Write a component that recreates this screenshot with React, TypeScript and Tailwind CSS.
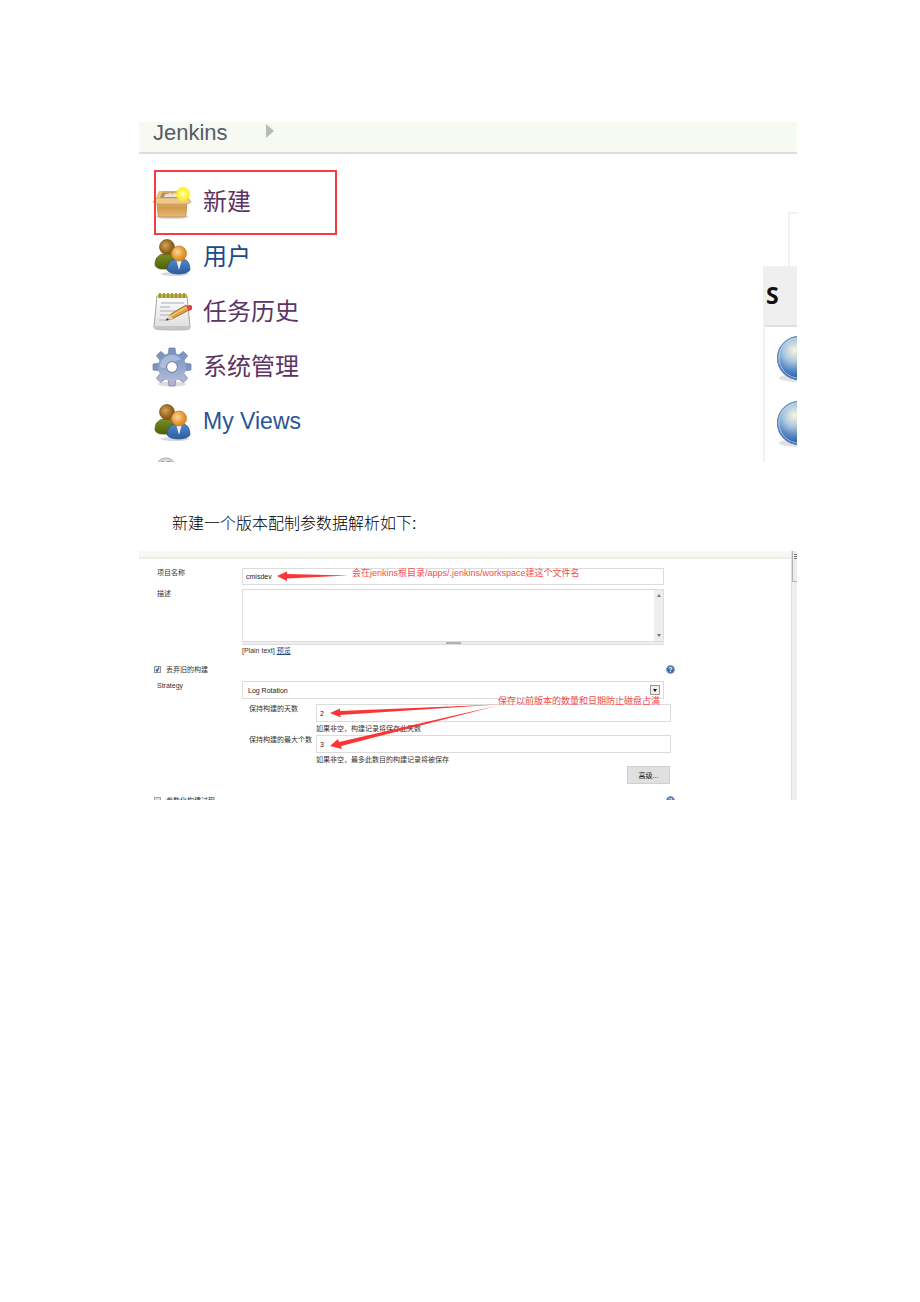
import type { ReactNode } from 'react';

function BoxIcon() {
  return (
    <svg viewBox="0 0 40 40" className="h-10 w-10 shrink-0" aria-hidden="true">
      <defs>
        <linearGradient id="boxFront" x1="0" y1="0" x2="0" y2="1">
          <stop offset="0" stopColor="#e6b877" />
          <stop offset="0.5" stopColor="#d29a4c" />
          <stop offset="1" stopColor="#e9bd7c" />
        </linearGradient>
        <radialGradient id="boxStar">
          <stop offset="0" stopColor="#fffef0" />
          <stop offset="0.3" stopColor="#fff87a" />
          <stop offset="0.7" stopColor="#fdf21c" />
          <stop offset="1" stopColor="#fdf21c" stopOpacity="0" />
        </radialGradient>
      </defs>
      <ellipse cx="20" cy="35" rx="17" ry="2" fill="#000" opacity="0.13" />
      <path d="M7 9h25l3 8H4z" fill="#d9a864" />
      <path d="M9 11h22l2 5H7z" fill="#b98d54" />
      <path d="M12 15q1-4 4-3 2-2 4 0 3-2 5 0 3 0 3 3z" fill="#e6e2da" />
      <path d="M5 17h30l-1 16q0 2-2 2H8q-2 0-2-2z" fill="url(#boxFront)" stroke="#b98644" strokeWidth="0.8" />
      <path d="M4 16L1 20l3 2h32l3-2-3-4z" fill="#efc88f" stroke="#c99a5a" strokeWidth="0.7" />
      <path d="M7 9L4 16h4l3-7z" fill="#e8bf83" />
      <circle cx="31" cy="12" r="8" fill="url(#boxStar)" />
    </svg>
  );
}

function UsersIcon() {
  return (
    <svg viewBox="0 0 40 40" className="h-10 w-10 shrink-0" aria-hidden="true">
      <defs>
        <radialGradient id="headBack" cx="0.4" cy="0.4">
          <stop offset="0" stopColor="#d3a558" />
          <stop offset="1" stopColor="#8c5b16" />
        </radialGradient>
        <radialGradient id="headFront" cx="0.4" cy="0.4">
          <stop offset="0" stopColor="#fbd79a" />
          <stop offset="1" stopColor="#e0901f" />
        </radialGradient>
        <linearGradient id="bodyBack" x1="0" y1="0" x2="0" y2="1">
          <stop offset="0" stopColor="#7b8d22" />
          <stop offset="1" stopColor="#4e6105" />
        </linearGradient>
        <linearGradient id="bodyFront" x1="0" y1="0" x2="0" y2="1">
          <stop offset="0" stopColor="#5387cc" />
          <stop offset="1" stopColor="#2b5c9f" />
        </linearGradient>
      </defs>
      <ellipse cx="23" cy="37" rx="14" ry="2" fill="#000" opacity="0.15" />
      <path d="M3 27q0-8 8-10h8q4 2 5 7l-5 8H9q-6-1-6-5z" fill="url(#bodyBack)" stroke="#48580d" strokeWidth="0.7" />
      <circle cx="15" cy="10" r="7.5" fill="url(#headBack)" stroke="#7c5218" strokeWidth="0.7" />
      <path d="M15 33q0-9 8-11h9q6 2 6 11-3 4-11.5 4T15 33z" fill="url(#bodyFront)" stroke="#285292" strokeWidth="0.7" />
      <path d="M24 22l3 11 3-11z" fill="#eef3fa" />
      <circle cx="27" cy="16.5" r="7.5" fill="url(#headFront)" stroke="#b8741c" strokeWidth="0.7" />
    </svg>
  );
}

function NotepadIcon() {
  return (
    <svg viewBox="0 0 40 40" className="h-10 w-10 shrink-0" aria-hidden="true">
      <defs>
        <linearGradient id="padPaper" x1="0" y1="0" x2="0" y2="1">
          <stop offset="0" stopColor="#fff" />
          <stop offset="1" stopColor="#dedede" />
        </linearGradient>
      </defs>
      <ellipse cx="21" cy="37.5" rx="17" ry="1.5" fill="#000" opacity="0.15" />
      <path d="M5 4h30l3 31q0 2-2 2H4q-2 0-2-2z" fill="url(#padPaper)" stroke="#a5a5a0" strokeWidth="1" />
      <path d="M2 34h36v2q0 1-2 1H4q-2 0-2-1z" fill="#c5c5c2" />
      <path d="M6 2h29v4H6z" fill="#c2b64a" />
      <path d="M8 1v5M12 1v5M16 1v5M20 1v5M24 1v5M28 1v5M32 1v5" stroke="#94882f" strokeWidth="1.5" />
      <path d="M9 11h23M8 15h10M8 19h20M8 23h11M7 28h8" stroke="#c4c4c4" strokeWidth="1.3" />
      <path d="M15 28l4-6 15-9 3 5-17 9z" fill="#dfa040" stroke="#8f6424" strokeWidth="0.8" />
      <path d="M19 24l16-9" stroke="#f4cf83" strokeWidth="1.3" />
      <path d="M14 28l4-5 3 4z" fill="#e9d1a5" />
      <path d="M13.5 28.5l2-2.5 1.5 2z" fill="#333" />
      <path d="M34 14l3-1q4 0 4 4l-4 2z" fill="#e2433e" />
    </svg>
  );
}

const teeth = [0, 45, 90, 135, 180, 225, 270, 315];

function GearIcon() {
  return (
    <svg viewBox="0 0 40 40" className="h-10 w-10 shrink-0" aria-hidden="true">
      <defs>
        <linearGradient id="gearBody" gradientUnits="userSpaceOnUse" x1="0" y1="0" x2="0" y2="40">
          <stop offset="0" stopColor="#6f8cb8" />
          <stop offset="0.5" stopColor="#91a5cb" />
          <stop offset="1" stopColor="#c3c0dd" />
        </linearGradient>
      </defs>
      <ellipse cx="20" cy="37" rx="14" ry="2.5" fill="#000" opacity="0.14" />
      {teeth.map(angle => (
        <path key={angle} d="M16 9l1-8h6l1 8z" fill={angle > 90 && angle < 270 ? '#b0b2d4' : '#7d95bf'} stroke="#6f80a6" strokeWidth="0.7" transform={`rotate(${angle} 20 20)`} />
      ))}
      <path fillRule="evenodd" d="M20 6a14 14 0 1 0 0 28a14 14 0 1 0 0-28zM20 15a5 5 0 1 1 0 10a5 5 0 1 1 0-10z" fill="url(#gearBody)" />
      <path d="M8 20a12 12 0 0 1 21-8q-7 3-9 3-4 0-5 5-3 2-7 0z" fill="#c9d6ea" opacity="0.55" />
      <circle cx="20" cy="20" r="5.5" fill="none" stroke="#7182ab" strokeWidth="1" />
    </svg>
  );
}

function DomeIcon() {
  return (
    <svg viewBox="0 0 40 40" className="h-10 w-10 shrink-0" aria-hidden="true">
      <circle cx="14" cy="11" r="10" fill="#dcdcdc" stroke="#a8a8a8" strokeWidth="1" />
      <path d="M9 5h3M15 5h4" stroke="#888" strokeWidth="1.5" />
    </svg>
  );
}

function BallIcon() {
  return (
    <svg viewBox="0 0 48 48" className="h-12 w-12 max-w-none" aria-hidden="true">
      <defs>
        <radialGradient id="ball" cx="0.4" cy="0.33" r="0.65">
          <stop offset="0" stopColor="#f6f7df" />
          <stop offset="0.4" stopColor="#aac5df" />
          <stop offset="0.7" stopColor="#5688c2" />
          <stop offset="1" stopColor="#2a5ba4" />
        </radialGradient>
      </defs>
      <ellipse cx="24" cy="43" rx="20" ry="4" fill="#000" opacity="0.12" />
      <circle cx="24" cy="23" r="22" fill="url(#ball)" />
      <circle cx="24" cy="23" r="21.5" fill="none" stroke="#5f86bb" strokeWidth="1" />
      <circle cx="24" cy="23" r="20" fill="none" stroke="#cfdeee" strokeWidth="1" opacity="0.7" />
    </svg>
  );
}

function HelpIcon() {
  return (
    <button type="button" aria-label="帮助" className="flex h-[9px] w-[9px] shrink-0 items-center justify-center rounded-full border border-[#8fa8cb] bg-[#3c659f] text-[7px] leading-none font-bold text-white">
      ?
    </button>
  );
}

const menu: { label: string; icon: ReactNode; color: string; boxed?: boolean }[] = [
  { label: '新建', icon: <BoxIcon />, color: 'text-[#5c3566]', boxed: true },
  { label: '用户', icon: <UsersIcon />, color: 'text-[#204a87]' },
  { label: '任务历史', icon: <NotepadIcon />, color: 'text-[#5c3566]' },
  { label: '系统管理', icon: <GearIcon />, color: 'text-[#5c3566]' },
];

function MenuPanel() {
  return (
    <section>
      <header className="flex h-8 items-start gap-[38px] border-b-2 border-[#dcddd8] bg-[#f6faf2] pl-[14px]">
        <a href="#jenkins" className="text-[22px] leading-[22px] text-[#555c66]">Jenkins</a>
        <svg viewBox="0 0 8 14" className="mt-[2px] h-[14px] w-2" aria-hidden="true">
          <path d="M0 0l8 7-8 7z" fill="#b9bbb8" />
        </svg>
      </header>
      <div className="flex h-[308px] justify-between overflow-hidden">
        <nav className="flex flex-col pt-5 pl-[13px]">
          {menu.map(item => (
            <a key={item.label} href="#menu" className={`relative flex h-[55px] shrink-0 items-center gap-[11px] text-2xl ${item.color}`}>
              {item.icon}
              <span>{item.label}</span>
              {item.boxed && <span className="absolute -top-1 left-[2px] h-[65px] w-[183px] border-2 border-[#f63d3d]" />}
            </a>
          ))}
          <a href="#views" className="flex h-[55px] shrink-0 items-center gap-[11px] text-[23px] text-[#2a5596]">
            <UsersIcon />
            <span>My Views</span>
          </a>
          <a href="#more" aria-label="更多" className="flex h-[55px] shrink-0 items-center">
            <DomeIcon />
          </a>
        </nav>
        <div className="flex w-[34px] flex-col overflow-hidden pt-[58px]">
          <div className="ml-[25px] h-[54px] shrink-0 border-t-2 border-l-2 border-[#f2f2f2]" />
          <div className="flex-1 border-l-2 border-[#f0f0f0]">
            <table className="w-full table-fixed border-collapse">
              <thead>
                <tr className="h-[60px] border-b-2 border-[#dfdfdf] bg-[#efefef]">
                  <th className="p-0 pl-px text-left font-['Open_Sans',sans-serif] text-[23px] font-bold text-[#111]">S</th>
                </tr>
              </thead>
              <tbody>
                <tr className="h-[65px]"><td className="p-0 pl-[10px]"><BallIcon /></td></tr>
                <tr className="h-[65px]"><td className="p-0 pl-[10px]"><BallIcon /></td></tr>
              </tbody>
            </table>
          </div>
        </div>
      </div>
    </section>
  );
}

const field = 'block w-full border border-[#dcdcdc] bg-white text-[7px] leading-[9px] text-[#222] outline-none';

function Annotations() {
  return (
    <div className="pointer-events-none absolute inset-0 text-[9px] leading-[12px] whitespace-nowrap text-[#fb4a4a]">
      <svg viewBox="0 0 370 200" className="absolute top-0 left-0 h-[200px] w-[370px]" fill="#fb3535" aria-hidden="true">
        <path d="M138 25l10-4.5v2.5l61 1.5-61 3v2.5z" />
        <path d="M191 162l10-4.5v2.5l158-6.5-158 10.5 1 2.5z" />
        <path d="M191 195l8-7 1 3 159-36.5-157 40.5 1 3z" />
      </svg>
      <span className="absolute top-[16px] left-[213px]">会在jenkins根目录/apps/.jenkins/workspace建这个文件名</span>
      <span className="absolute top-[144px] left-[359px]">保存以前版本的数量和日期防止磁盘占满</span>
    </div>
  );
}

function NumberRow({ id, label, value, hint }: { id: string; label: string; value: string; hint: string }) {
  return (
    <div className="flex h-[31px] items-start">
      <label htmlFor={id} className="w-[67px] shrink-0 whitespace-nowrap">{label}</label>
      <div className="flex-1">
        <input id={id} defaultValue={value} className={`${field} h-[18px] px-[3px]`} />
        <p className="pt-[2px]">{hint}</p>
      </div>
    </div>
  );
}

function ConfigPanel() {
  return (
    <section className="relative flex h-[249px] overflow-hidden text-[7px] leading-[9px] text-[#333]">
      <div className="min-w-0 flex-1">
        <div className="h-2 border-b-2 border-[#eceee8] bg-[#f6f8f1]" />
        <form className="pt-[9px] pr-[120px] pl-[18px]" onSubmit={e => e.preventDefault()}>
          <div className="flex h-[21px] items-start pr-[7px]">
            <label htmlFor="name" className="w-[85px] shrink-0">项目名称</label>
            <input id="name" defaultValue="cmisdev" className={`${field} h-[17px] px-[3px]`} />
          </div>
          <div className="flex items-start pr-[7px]">
            <label htmlFor="description" className="w-[85px] shrink-0">描述</label>
            <div className="flex-1">
              <div className="flex h-[53px] border border-[#dcdcdc]">
                <textarea id="description" className="min-w-0 flex-1 resize-none outline-none" />
                <div className="flex w-[9px] flex-col items-center justify-between bg-[#eee] py-1">
                  <svg viewBox="0 0 4 3" className="h-[3px] w-1" aria-hidden="true"><path d="M0 3l2-3 2 3z" fill="#777" /></svg>
                  <svg viewBox="0 0 4 3" className="h-[3px] w-1" aria-hidden="true"><path d="M0 0l2 3 2-3z" fill="#777" /></svg>
                </div>
              </div>
              <div className="flex h-[3px] justify-center border-b border-[#dcdcdc] bg-[#eee]">
                <span className="h-[2px] w-[15px] bg-[#b0b0b0]" />
              </div>
              <p className="pt-px">[Plain text] <a href="#preview" className="text-[#204a87] underline">预览</a></p>
            </div>
          </div>
          <div className="-ml-[3px] flex items-center justify-between pt-[10px]">
            <label className="flex items-center gap-[5px]">
              <span className="relative flex">
                <input type="checkbox" defaultChecked className="h-[7px] w-[7px] appearance-none border border-[#8e9299] bg-[#e4e8ee]" />
                <svg viewBox="0 0 7 7" className="absolute inset-0 h-[7px] w-[7px]" aria-hidden="true">
                  <path d="M2 3.5l1 1.5 2-3.5" fill="none" stroke="#2d4b9b" strokeWidth="1.2" />
                </svg>
              </span>
              丢弃旧的构建
            </label>
            <span className="-mr-1"><HelpIcon /></span>
          </div>
          <div className="flex items-start pt-[7px]">
            <label htmlFor="strategy" className="w-[85px] shrink-0">Strategy</label>
            <div className="flex-1">
              <div className="relative mr-[7px]">
                <select id="strategy" className={`${field} h-[18px] appearance-none px-[5px]`}>
                  <option>Log Rotation</option>
                </select>
                <span className="pointer-events-none absolute top-1 right-1 flex h-[10px] w-[10px] items-center justify-center border border-[#999] bg-[#eee]">
                  <svg viewBox="0 0 4 3" className="h-[3px] w-1" aria-hidden="true"><path d="M0 0h4l-2 3z" fill="#111" /></svg>
                </span>
              </div>
              <div className="pt-[5px] pl-[7px]">
                <NumberRow id="days" label="保持构建的天数" value="2" hint="如果非空，构建记录将保存此天数" />
                <NumberRow id="count" label="保持构建的最大个数" value="3" hint="如果非空，最多此数目的构建记录将被保存" />
              </div>
              <div className="flex justify-end pr-px">
                <button type="button" className="h-[18px] w-[43px] border border-[#d0d0d0] bg-[#e0e0e0] text-[#222]">高级...</button>
              </div>
            </div>
          </div>
          <div className="-ml-[3px] flex items-center justify-between pt-3">
            <label className="flex items-center gap-[5px]">
              <input type="checkbox" className="h-[7px] w-[7px] appearance-none border border-[#a5a5a5] bg-[#ddd]" />
              参数化构建过程
            </label>
            <span className="-mr-1"><HelpIcon /></span>
          </div>
        </form>
      </div>
      <div className="w-[6px] border-l border-[#dedede] bg-[#eee]">
        <div className="flex h-[31px] flex-col items-end gap-px border-b border-l border-[#b5b5b5] bg-[#ececec] pt-[3px]">
          <span className="h-px w-[3px] bg-[#777]" />
          <span className="h-px w-[3px] bg-[#777]" />
          <span className="h-px w-[3px] bg-[#777]" />
        </div>
      </div>
      <Annotations />
    </section>
  );
}

export default function App() {
  return (
    <main className="min-h-screen bg-white pt-[122px] pr-[123px] pl-[139px] font-['Liberation_Sans','Noto_Sans_CJK_SC',sans-serif]">
      <MenuPanel />
      <p className="pt-[50px] pb-[15px] pl-[33px] text-base font-light text-black">新建一个版本配制参数据解析如下:</p>
      <ConfigPanel />
    </main>
  );
}
